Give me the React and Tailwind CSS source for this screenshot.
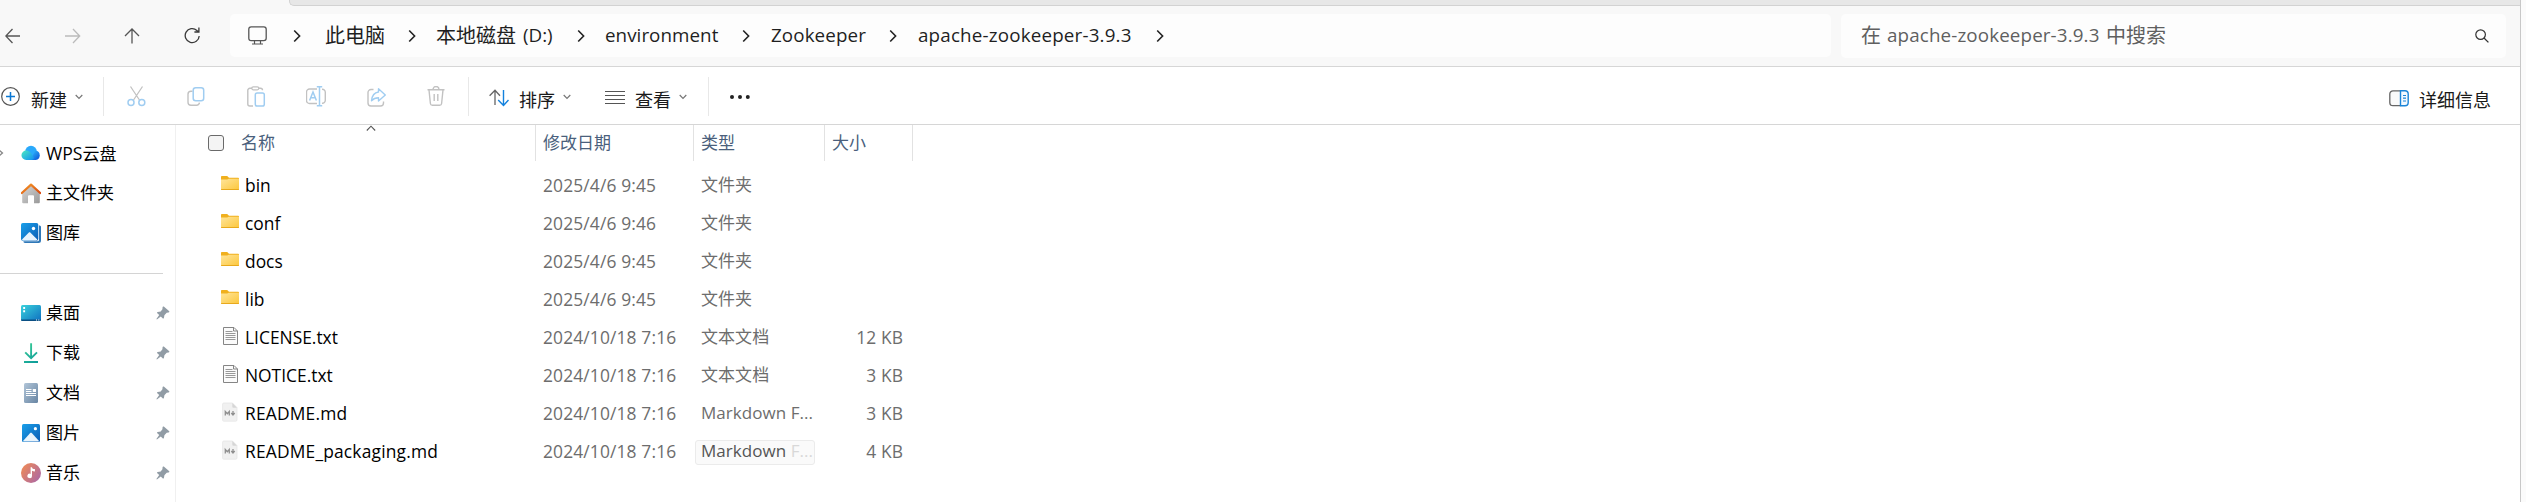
import React from "react";

const SANS = "font-['Open_Sans','Noto_Sans_CJK_SC',sans-serif]";
const CJK = "font-['Noto_Sans_CJK_SC',sans-serif]";

function Svg({ w, h, className = "", children, ...rest }) {
  return (
    <svg width={w} height={h} viewBox={`0 0 ${w} ${h}`} fill="none" className={`block shrink-0 ${className}`} {...rest}>
      {children}
    </svg>
  );
}

/* ---------- navigation bar ---------- */

function Crumb({ children, className }) {
  return <span className={`mb-[2px] block shrink-0 whitespace-nowrap leading-[28px] ${className}`}>{children}</span>;
}

function CrumbArrow({ className }) {
  return (
    <Svg w={8} h={14} className={className}>
      <path d="M1.2 1.5 6.6 7 1.2 12.5" stroke="#222" strokeWidth="1.6" />
    </Svg>
  );
}

function NavBar() {
  return (
    <div className="flex h-[61px] items-start border-b border-[#d6d6d6] bg-[#f8f8f8] pt-2">
      <div className="flex h-[43px] w-[230px] shrink-0 items-center pl-[5px]">
        <Svg w={16} h={16}>
          <path d="M15 8H1M7.5 1 .8 8l6.7 7" stroke="#555" strokeWidth="1.3" />
        </Svg>
        <Svg w={16} h={16} className="ml-[44px]">
          <path d="M0 8h14.5M8 1l6.7 7L8 15" stroke="#bbb" strokeWidth="1.3" />
        </Svg>
        <Svg w={16} h={16} className="ml-[43px]">
          <path d="M8 15.5V1M1 8l7-7 7 7" stroke="#555" strokeWidth="1.3" />
        </Svg>
        <Svg w={16} h={17} className="ml-[44px]">
          <path d="M15.2 9a7 7 0 1 1-2.3-5.6L14.8 5M14.9.5V5h-4.5" stroke="#3a3a3a" strokeWidth="1.3" />
        </Svg>
      </div>
      <div className="ml-0 flex h-[43px] w-[1601px] shrink-0 items-center rounded-[5px] bg-[#fdfdfd] pl-[18px] text-[18.8px] text-[#1f1f1f]">
        <Svg w={19} h={19}>
          <rect x="0.8" y="0.8" width="17.4" height="13.8" rx="2.4" stroke="#555" strokeWidth="1.3" />
          <path d="M6.5 15v2.8M12.5 15v2.8M4 18h11" stroke="#555" strokeWidth="1.2" />
        </Svg>
        <CrumbArrow className="ml-[26px]" />
        <Crumb className={`ml-[24px] w-[83px] text-[20px] ${CJK}`}>此电脑</Crumb>
        <CrumbArrow />
        <Crumb className="ml-[20px] flex w-[141px]">
          <span className={`w-[87px] shrink-0 text-[20px] ${CJK}`}>本地磁盘</span>(D:)
        </Crumb>
        <CrumbArrow />
        <Crumb className="ml-[20px] w-[137px] tracking-[0.05px]">environment</Crumb>
        <CrumbArrow />
        <Crumb className="ml-[21px] w-[118px] tracking-[0.1px]">Zookeeper</Crumb>
        <CrumbArrow />
        <Crumb className="ml-[21px] w-[238px] tracking-[0.18px]">apache-zookeeper-3.9.3</Crumb>
        <CrumbArrow />
      </div>
      <div className="ml-[10px] flex h-[44px] w-[665px] shrink-0 items-center rounded-[5px] bg-[#fdfdfd] pl-5 text-[18.8px] text-[#5f5f5f]">
        <Crumb className={`w-[26px] text-[20px] ${CJK}`}>在</Crumb>
        <Crumb className="w-[219px] tracking-[0.13px]">apache-zookeeper-3.9.3</Crumb>
        <Crumb className={`text-[20px] ${CJK}`}>中搜索</Crumb>
        <Svg w={14} h={14} className="ml-auto mr-[17px]">
          <circle cx="5.6" cy="5.6" r="4.8" stroke="#333" strokeWidth="1.2" />
          <path d="m9 9 4.4 4.4" stroke="#333" strokeWidth="1.3" />
        </Svg>
      </div>
    </div>
  );
}

/* ---------- command bar ---------- */

function Caret({ className = "" }) {
  return (
    <Svg w={8} h={6} className={className}>
      <path d="M.7 1 4 4.4 7.3 1" stroke="#777" strokeWidth="1.2" />
    </Svg>
  );
}

function Label({ children, className }) {
  return <span className={`block shrink-0 whitespace-nowrap text-[18px] leading-[26px] text-[#1a1a1a] ${CJK} ${className}`}>{children}</span>;
}

const Divider = ({ className }) => <div className={`h-[39px] w-px shrink-0 bg-[#e8e8e8] ${className}`} />;

function CommandBar() {
  const g = "#c2c2c2";
  const b = "#a0cdf1";
  return (
    <div className="flex h-[58px] items-center border-b border-[#d6d6d6] bg-white pt-[2px]">
      <Svg w={20} h={20} className="ml-[1px] mt-[1px]">
        <circle cx="9.5" cy="9.5" r="8.8" stroke="#555" strokeWidth="1.2" />
        <path d="M9.5 5v9M5 9.5h9" stroke="#0a78d4" strokeWidth="1.5" />
      </Svg>
      <Label className="ml-[10px] mt-[4px] w-[44px]">新建</Label>
      <Caret />
      <Divider className="ml-[20px]" />
      <Svg w={20} h={21} className="ml-[23px]">
        <path d="m3.5.5 9.3 14M15.5.5l-9.3 14" stroke={g} strokeWidth="1.3" />
        <circle cx="4" cy="16.6" r="3" stroke={b} strokeWidth="1.5" />
        <circle cx="14.8" cy="16.6" r="3" stroke={b} strokeWidth="1.5" />
      </Svg>
      <Svg w={20} h={20} className="ml-[40px]">
        <path d="M5.5 4.2H4A3 3 0 0 0 1 7.2v8A3 3 0 0 0 4 18.2h5.5a3 3 0 0 0 3-2.500" stroke={g} strokeWidth="1.4" />
        <rect x="6.200" y="0.800" width="10.500" height="13" rx="2.500" stroke={b} strokeWidth="1.5" />
      </Svg>
      <Svg w={20} h={21} className="ml-[40px]">
        <path d="M5 2.300H2.800a2 2 0 0 0-2 2V18a2 2 0 0 0 2 2H6M11.500 2.300h2a2 2 0 0 1 2 2" stroke={g} strokeWidth="1.4" />
        <rect x="4.800" y="0.800" width="7" height="3" rx="1.500" stroke={g} strokeWidth="1.3" />
        <rect x="8.300" y="7" width="9" height="13" rx="1.800" stroke={b} strokeWidth="1.500" />
      </Svg>
      <Svg w={21} h={21} className="ml-[39px]">
        <path d="M11 3H3.500a3 3 0 0 0-3 3v8.500a3 3 0 0 0 3 3H11M16 3.200a3 3 0 0 1 3.300 3v8a3 3 0 0 1-3.300 3" stroke={g} strokeWidth="1.400" />
        <path d="M3.600 14.500 7 6l3.400 8.500M4.800 11.800h4.400M10.800.8h5.400M10.800 19.800h5.400M13.500.8v19" stroke={b} strokeWidth="1.500" />
      </Svg>
      <Svg w={20} h={20} className="ml-[40px]">
        <path d="M6.500 2.500H4a3 3 0 0 0-3 3V16a3 3 0 0 0 3 3h9.500a3 3 0 0 0 3-3v-1.500" stroke={g} strokeWidth="1.400" />
        <path d="M11.500 5V1.800L18.300 8l-6.800 6v-3.200c-3 0-5 .8-7 3C5 8.500 7.500 5.500 11.500 5Z" stroke={b} strokeWidth="1.400" strokeLinejoin="round" />
      </Svg>
      <Svg w={18} h={21} className="ml-[40px]">
        <path d="M.5 3.800h17M6 3.500a3 3 0 0 1 6 0M2 4l1.400 13.500a2 2 0 0 0 2 1.800h7.200a2 2 0 0 0 2-1.800L16 4M7.200 8v7M10.800 8v7" stroke={g} strokeWidth="1.400" />
      </Svg>
      <Divider className="ml-[23px]" />
      <Svg w={20} h={18} className="ml-[20px] mt-[2px]">
        <path d="M6 16V1.500M.6 6.800 6 1.200l5 5.600" stroke="#666" strokeWidth="1.300" />
        <path d="M14.500 1v15M9.200 11l5.300 5.500 5-5.500" stroke="#1381dd" strokeWidth="1.400" />
      </Svg>
      <Label className="ml-[10px] mt-[4px] w-[44px]">排序</Label>
      <Caret />
      <Svg w={20} h={15} className="ml-[34px] mt-[2px]">
        <path d="M0 1.500h20M0 5.500h20M0 9.500h20M0 13.500h20" stroke="#555" strokeWidth="1.1" />
      </Svg>
      <Label className="ml-[10px] mt-[4px] w-[44px]">查看</Label>
      <Caret />
      <Divider className="ml-[21px]" />
      <Svg w={22} h={6} className="ml-[20px]">
        <circle cx="3" cy="3" r="2" fill="#222" />
        <circle cx="11" cy="3" r="2" fill="#222" />
        <circle cx="18.800" cy="3" r="2" fill="#222" />
      </Svg>
      <Svg w={20} h={17} className="ml-auto mt-[3px]">
        <path d="M11.500.8H4A3.200 3.200 0 0 0 .8 4v8.500A3.200 3.200 0 0 0 4 15.700h7.500" stroke="#666" strokeWidth="1.300" fill="#fafafa" />
        <path d="M11.500.8H16A3.200 3.200 0 0 1 19.200 4v8.500a3.200 3.200 0 0 1-3.200 3.200h-4.500Z" stroke="#1a84d8" strokeWidth="1.400" fill="#f2f9ff" />
        <path d="M14 5.500h3M14 8.200h3M14 11h3" stroke="#1a84d8" strokeWidth="1.200" />
      </Svg>
      <Label className="ml-[10px] mr-[29px] mt-[4px]">详细信息</Label>
    </div>
  );
}

/* ---------- sidebar ---------- */

function CloudIcon() {
  return (
    <Svg w={20} h={20}>
      <defs>
        <linearGradient id="cl1" x1="0" y1="0" x2="1" y2="1">
          <stop stopColor="#35c8ff" />
          <stop offset="1" stopColor="#0a4fd8" />
        </linearGradient>
        <linearGradient id="cl2" x1="0" y1="0" x2="1" y2="1">
          <stop stopColor="#4be8c0" />
          <stop offset="1" stopColor="#1090f5" />
        </linearGradient>
      </defs>
      <circle cx="10" cy="8.500" r="5.800" fill="#2aa9fb" />
      <path d="M9 17 14.500 7.500a4.800 4.800 0 0 1 .2 9.500Z" fill="url(#cl1)" />
      <path d="M5.200 7.500c2.500 0 4 1.500 5.200 3.200L13 15c-.8 1.500-2 2-3.500 2H5.200a4.700 4.700 0 0 1 0-9.500Z" fill="url(#cl2)" />
    </Svg>
  );
}

function HomeIcon() {
  return (
    <Svg w={20} h={21}>
      <defs>
        <linearGradient id="hm1" x1="0" y1="0" x2="1" y2="1">
          <stop stopColor="#d8d8d8" />
          <stop offset="1" stopColor="#999" />
        </linearGradient>
        <linearGradient id="hm2" x1="0" y1="0" x2="1" y2="1">
          <stop stopColor="#f49a28" />
          <stop offset="1" stopColor="#d9480f" />
        </linearGradient>
      </defs>
      <path d="M1.200 9 10 1.500 18.800 9v10.200a1 1 0 0 1-1 1H13v-7a1 1 0 0 0-1-1H8a1 1 0 0 0-1 1v7H2.200a1 1 0 0 1-1-1Z" fill="url(#hm1)" />
      <path d="M.8 10 10 1.600 19.200 10" stroke="url(#hm2)" strokeWidth="2.200" strokeLinecap="round" strokeLinejoin="round" />
    </Svg>
  );
}

function BlueDefs({ id }) {
  return (
    <defs>
      <linearGradient id={id} x1="0" y1="0" x2="1" y2="1">
        <stop stopColor="#1aa0ea" />
        <stop offset="1" stopColor="#0a5cb4" />
      </linearGradient>
    </defs>
  );
}

function GalleryIcon() {
  return (
    <Svg w={20} h={20}>
      <BlueDefs id="gal" />
      <path d="M18 2.500c1.200 0 2 .5 2 1.500v13.500a2.500 2.500 0 0 1-2.500 2.500H4c-1 0-1.600-.7-1.600-1.700H16.500A1.500 1.500 0 0 0 18 16.800Z" fill="#2f78b8" />
      <rect width="17.300" height="17.800" rx="1.800" fill="url(#gal)" />
      <path d="M1 16.500 7.600 9.800c.6-.6 1.300-.6 1.900 0l6.800 6.700c-.3.700-.8.900-1.300.9H2.300c-.6 0-1.100-.3-1.300-.9Z" fill="#e6f3fd" />
      <circle cx="12.500" cy="5.500" r="1.700" fill="#fff" />
    </Svg>
  );
}

function DesktopIcon() {
  return (
    <Svg w={20} h={20}>
      <defs>
        <linearGradient id="dsk" x1="0" y1="0" x2="1" y2="1">
          <stop stopColor="#3ad3dc" />
          <stop offset="1" stopColor="#0f6fc0" />
        </linearGradient>
      </defs>
      <rect y="2" width="20" height="16" rx="1.500" fill="url(#dsk)" />
      <path d="M0 16.500h20a1.500 1.500 0 0 1-1.500 1.500h-17A1.500 1.500 0 0 1 0 16.500Z" fill="#0b4f83" />
      <path d="M2.200 4h1.900v1.900H2.200zM2.200 7.300h1.900v1.900H2.200zM15 16.500h1v1h-1zM17.300 16.500h1v1h-1z" fill="#fff" />
    </Svg>
  );
}

function DownloadIcon() {
  return (
    <Svg w={20} h={20}>
      <defs>
        <linearGradient id="dl" gradientUnits="userSpaceOnUse" x1="3" y1="0" x2="17" y2="20">
          <stop stopColor="#3dcf96" />
          <stop offset="1" stopColor="#0c9a9a" />
        </linearGradient>
      </defs>
      <path d="M10.100.3V15M4.200 9.300l5.900 5.900 5.900-5.900M3 19h14" stroke="url(#dl)" strokeWidth="1.900" />
    </Svg>
  );
}

function DocumentIcon() {
  return (
    <Svg w={20} h={20}>
      <defs>
        <linearGradient id="doc" x1="0" y1="0" x2="1" y2="1">
          <stop stopColor="#b1c5d8" />
          <stop offset="1" stopColor="#6885a3" />
        </linearGradient>
      </defs>
      <rect x="3" width="14" height="20" rx="1.500" fill="url(#doc)" />
      <path d="M5 6.500h5.500M5 8.500h5.500M5 10.500h10M5 12.500h10" stroke="#fff" strokeWidth="1" />
      <path d="M11.800 6h3.200v3h-3.200z" fill="#fff" />
    </Svg>
  );
}

function PictureIcon() {
  return (
    <Svg w={20} h={20}>
      <BlueDefs id="pic" />
      <rect x="1" y="1" width="18" height="18" rx="1.500" fill="url(#pic)" />
      <path d="m2 18 7-7.700c.6-.6 1.400-.6 2 0l7 7.700c-.3.500-.6.500-1 .5H3c-.4 0-.7 0-1-.5Z" fill="#e9f4fc" />
      <circle cx="14.400" cy="5.700" r="1.600" fill="#fff" />
    </Svg>
  );
}

function MusicIcon() {
  return (
    <Svg w={20} h={20}>
      <defs>
        <linearGradient id="mus" x1="0" y1="0.200" x2="1" y2="0.900">
          <stop stopColor="#ee8a58" />
          <stop offset="1" stopColor="#a866a8" />
        </linearGradient>
      </defs>
      <circle cx="10" cy="10" r="10" fill="url(#mus)" />
      <path d="M9.600 4.200h1.400c.2 1.500 1.200 1.900 2.900 1.900v2.300c-1.300 0-2.200-.2-2.900-.7v5.200a2.300 2.200 0 1 1-1.400-2Z" fill="#fff" />
    </Svg>
  );
}

function Pin() {
  return (
    <Svg w={14} h={14} className="ml-auto mr-[5px]">
      <path d="M7.800.6 13 4.900c.7.600.3 1.400-.5 1.500l-1.800.4-2.300 2.400-.5 2.700c-.2.700-.8.900-1.300.4L4.800 10.500.9 13.600l-.5-.5 2.800-4L1.300 7.200c-.5-.5-.3-1.200.4-1.300l3-.5 1.700-2.200L6.600 1c.1-.6.700-.8 1.200-.4Z" fill="#919ca5" />
    </Svg>
  );
}

function SideItem({ icon, children, pinned, expand }) {
  return (
    <div className="flex h-[40px] w-[175px] items-center">
      <div className="w-[21px] shrink-0">
        {expand && (
          <Svg w={4} h={10}>
            <path d="M-2 1 2.500 5-2 9" stroke="#888" strokeWidth="1.300" />
          </Svg>
        )}
      </div>
      {icon}
      <span className="ml-[5px] whitespace-nowrap text-[17px] leading-[24px] text-black">{children}</span>
      {pinned && <Pin />}
    </div>
  );
}

function Sidebar() {
  return (
    <div className="flex h-full w-[176px] shrink-0 flex-col border-r border-[#f0f0f0] pt-[8px]">
      <SideItem icon={<CloudIcon />} expand>
        <span className="text-[17.6px]">WPS</span>云盘
      </SideItem>
      <SideItem icon={<HomeIcon />}>主文件夹</SideItem>
      <SideItem icon={<GalleryIcon />}>图库</SideItem>
      <div className="flex h-[40px] items-center">
        <div className="h-px w-[163px] bg-[#d4d4d4]" />
      </div>
      <SideItem icon={<DesktopIcon />} pinned>桌面</SideItem>
      <SideItem icon={<DownloadIcon />} pinned>下载</SideItem>
      <SideItem icon={<DocumentIcon />} pinned>文档</SideItem>
      <SideItem icon={<PictureIcon />} pinned>图片</SideItem>
      <SideItem icon={<MusicIcon />} pinned>音乐</SideItem>
    </div>
  );
}

/* ---------- file list ---------- */

function FolderIcon() {
  return (
    <Svg w={20} h={20}>
      <defs>
        <linearGradient id="fld" x1="0" y1="0" x2="1" y2="1">
          <stop stopColor="#ffe59a" />
          <stop offset="1" stopColor="#fcc73c" />
        </linearGradient>
      </defs>
      <path d="M1 4V2.700c0-.5.300-.8.800-.8h5.400l1.800 1.800h9.200c.5 0 .8.300.8.800V6H1Z" fill="#f0b01e" />
      <path d="M1 5.600h6.200L8.700 4.700H19V15c0 .600-.3.900-.9.900H1.900c-.6 0-.9-.3-.9-.9Z" fill="url(#fld)" />
      <path d="M1 14.900h18c0 .8-.3 1.100-.9 1.100H1.900c-.6 0-.9-.3-.9-1.100Z" fill="#e8a91c" />
    </Svg>
  );
}

function TextIcon() {
  return (
    <Svg w={20} h={20}>
      <path d="M3.500 1.500h10.500l3.500 3.500v13.500h-14Z" fill="#fbfbfb" stroke="#858585" strokeWidth="1" />
      <path d="M13.500 1.500v3.500h4" stroke="#858585" strokeWidth="1" />
      <path d="M5.500 5.500h7M5.500 7.500h10M5.500 9.500h10M5.500 11.500h10M5.500 13.500h10" stroke="#999" strokeWidth="1" />
    </Svg>
  );
}

function MarkdownIcon() {
  return (
    <Svg w={20} h={20}>
      <path d="M4 1h8.500L17 5.500V18a1.200 1.200 0 0 1-1.200 1.200H3.800A1.200 1.200 0 0 1 2.600 18V2.200A1.200 1.200 0 0 1 4 1Z" fill="#f1f1f1" stroke="#e6e6e6" strokeWidth="0.800" />
      <path d="M12.300 1v3.500c0 .8.400 1.200 1.200 1.200H17Z" fill="#d6d6d6" />
      <path d="M5.300 13.500V9.500l2 2.300 2-2.300v4" stroke="#8f8f8f" strokeWidth="1.300" />
      <path d="M13 9v3.500M11.300 11l1.700 2 1.700-2" stroke="#8f8f8f" strokeWidth="1.300" />
    </Svg>
  );
}

const FILES = [
  { icon: "folder", name: "bin", date: "2025/4/6 9:45", type: "文件夹", size: "" },
  { icon: "folder", name: "conf", date: "2025/4/6 9:46", type: "文件夹", size: "" },
  { icon: "folder", name: "docs", date: "2025/4/6 9:45", type: "文件夹", size: "" },
  { icon: "folder", name: "lib", date: "2025/4/6 9:45", type: "文件夹", size: "" },
  { icon: "text", name: "LICENSE.txt", date: "2024/10/18 7:16", type: "文本文档", size: "12 KB" },
  { icon: "text", name: "NOTICE.txt", date: "2024/10/18 7:16", type: "文本文档", size: "3 KB" },
  { icon: "md", name: "README.md", date: "2024/10/18 7:16", type: "Markdown F...", size: "3 KB" },
  { icon: "md", name: "README_packaging.md", date: "2024/10/18 7:16", type: "Markdown F...", size: "4 KB", tip: true },
];

const ICONS = { folder: <FolderIcon />, text: <TextIcon />, md: <MarkdownIcon /> };

function FileRow({ file }) {
  return (
    <div className="flex h-[38px] items-center whitespace-nowrap pl-[44px] text-[17.4px] leading-[24px] text-[#6d6d6d]">
      <div className="mb-[2px]">{ICONS[file.icon]}</div>
      <span className={`ml-[5px] w-[298px] shrink-0 text-black ${file.icon === "md" ? "tracking-[0.18px]" : ""}`}>{file.name}</span>
      <span className="w-[152px] shrink-0 tracking-[0.14px]">{file.date}</span>
      {file.tip ? (
        <span className="mt-[2px] flex h-[25px] w-[120px] shrink-0 items-center rounded-[3px] border border-[#ebebeb] bg-[#fafafa] pl-[5px] text-[17px] text-[#555]">
          <span className="-mt-[2px] tracking-[0.05px]">
            Markdown <span className="text-[#d8d8d8]">F...</span>
          </span>
        </span>
      ) : (
        <span className="w-[120px] shrink-0 pl-[6px] text-[17px] tracking-[0.05px]">{file.type}</span>
      )}
      <span className="w-[88px] shrink-0 text-right tracking-[0.1px]">{file.size}</span>
    </div>
  );
}

function HeadCell({ className, children }) {
  return <div className={`flex h-[36px] shrink-0 items-center border-r border-[#e2e2e2] ${className}`}>{children}</div>;
}

function FileList() {
  return (
    <div className="flex flex-1 flex-col">
      <div className="flex h-[41px] shrink-0 items-start text-[17px] leading-[24px] text-[#4a5f7c]">
        <HeadCell className="w-[360px] pl-[32px]">
          <div className="h-4 w-4 shrink-0 rounded-[3px] border border-[#6a6a6a] bg-[#f4f4f4]" />
          <span className="ml-[17px] w-[34px] shrink-0">名称</span>
          <Svg w={10} h={6} className="ml-[91px] self-start">
            <path d="M.8 5.500 5 1.200l4.200 4.300" stroke="#555" strokeWidth="1.1" />
          </Svg>
        </HeadCell>
        <HeadCell className="w-[158px] pl-[7px]">修改日期</HeadCell>
        <HeadCell className="w-[131px] pl-[7px]">类型</HeadCell>
        <HeadCell className="w-[88px] pl-[7px]">大小</HeadCell>
      </div>
      {FILES.map((f) => (
        <FileRow key={f.name} file={f} />
      ))}
    </div>
  );
}

export default function App() {
  return (
    <div className={`flex h-[502px] w-[2526px] overflow-hidden bg-[#fbfbfb] ${SANS}`}>
      <div className="flex w-[2521px] shrink-0 flex-col border-r border-[#c8c8c8] bg-white">
        <div className="h-[6px] bg-[#f8f8f8] pl-[289px]">
          <div className="h-[6px] rounded-bl-[5px] border-b border-l border-[#d2d2d2] bg-[#e7e7e7]" />
        </div>
        <NavBar />
        <CommandBar />
        <div className="flex min-h-0 flex-1">
          <Sidebar />
          <FileList />
        </div>
      </div>
    </div>
  );
}
